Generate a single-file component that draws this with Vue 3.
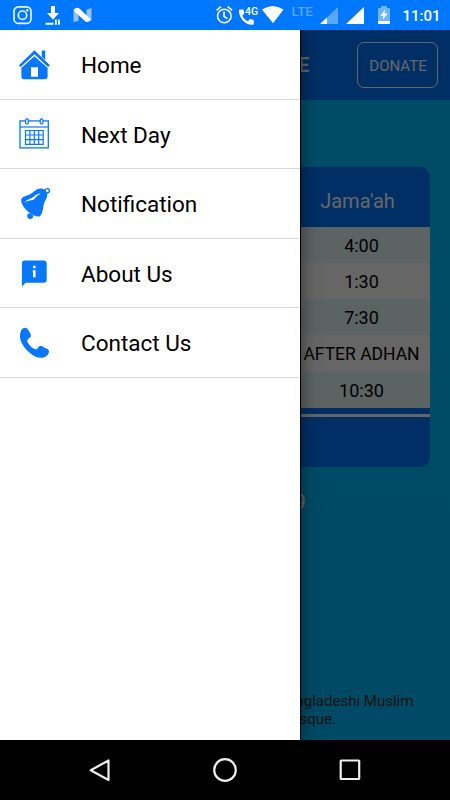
<script setup>
const items = [
  { id: 'home', label: 'Home' },
  { id: 'calendar', label: 'Next Day' },
  { id: 'bell', label: 'Notification' },
  { id: 'about', label: 'About Us' },
  { id: 'phone', label: 'Contact Us' },
]
const times = ['4:00', '1:30', '7:30', 'AFTER ADHAN', '10:30']
</script>

<template>
  <div class="phone">
    <header class="status">
      <svg class="status-icons" width="450" height="30" viewBox="0 0 450 30">
        <g fill="none" stroke="#e9f2ff" stroke-width="1.7">
          <rect x="14" y="6.8" width="17" height="16.6" rx="4.5" />
          <circle cx="22.5" cy="15.2" r="4.2" />
        </g>
        <circle cx="27.3" cy="10.3" r="1.2" fill="#e9f2ff" />
        <path d="M51 6h4v7h4l-6 6.500-6-6.500h4zM45.500 22.800h8v2h-8zM55 19.500h1.800v5.300H55zM58 19.500h1.800v5.300H58z" fill="#fff" />
        <path d="M73.500 9l5-1v13l-5 1zM86.500 9.500l5-1.500v12.500l-5 1z" fill="#8fc2ff" />
        <path d="M75 8.500q2.500-1.500 5 .5l11 10.500q-2 3-5 2.500L74 11z" fill="#fff" />
        <g fill="none" stroke="#fff" stroke-width="1.600">
          <circle cx="224.300" cy="16" r="6.800" />
          <path d="M224 11.500v5l3.500 2.100M216.500 10.300l4.500-3.700M227.600 6.600l4.500 3.700" />
        </g>
        <path transform="translate(236.500 6.800)" d="M3.400 2.600H7l.8 4.200-2 2.200c1.400 2.700 2.900 4.200 5.400 5.400l2.200-2.200 3.800 1v3.700c0 .7-.5 1.100-1.200 1.100C8.300 18 2.400 11 2.400 3.600c0-.6.400-1 1-1z" fill="#fff" />
        <path d="M262 9.500q10.700-7 21.600 0L273 23.200z" fill="#fff" />
        <path d="M338 7v17h-18z" fill="#59a7ff" />
        <path d="M327 17.500V24h-7z" fill="#fff" />
        <path d="M364 7v17h-18z" fill="#fff" />
        <path d="M378 8h3V6h6v2h3v13h-12z" fill="#70b3ff" />
        <path d="M378 21h12v3h-12zM385 9.500l-4.500 6.300h2.700l-.5 4.200 4.800-6.500h-3z" fill="#fff" />
      </svg>
      <span class="net">4G</span>
      <span class="lte">LTE</span>
      <span class="clock">11:01</span>
    </header>

    <div class="stage">
      <main class="page">
        <div class="bar">
          <span class="title">E</span>
          <button class="donate">DONATE</button>
        </div>
        <section class="card">
          <div class="card-head"><span class="cell">Jama'ah</span></div>
          <div v-for="time in times" :key="time" class="row"><span class="cell" :class="{ words: time.length > 5 }">{{ time }}</span></div>
          <div class="card-foot"></div>
        </section>
        <div class="date">9</div>
        <p class="about">ngladeshi Muslim<br /><span class="last">sque.</span></p>
      </main>
      <div class="scrim"></div>
      <nav class="drawer">
        <a v-for="item in items" :key="item.id" class="item">
          <svg class="icon" width="36" height="36" viewBox="0 0 36 36">
            <g v-if="item.id === 'home'" fill="#0877fc">
              <path d="M18.400 3.300 34 18.200l-2 1.800L18.400 7.200 4.700 20 2.900 18.200z" />
              <path d="M25.800 3.600h3.400v9.500l-3.400-3.300z" />
              <path fill-rule="evenodd" d="M18.400 9.200 32.200 21.500h-.6v8q0 2.700-2.700 2.700H8.100q-2.700 0-2.700-2.700v-8h-.6zM15 20.300v9.500h7v-9.500z" />
            </g>
            <g v-else-if="item.id === 'calendar'" fill="none" stroke="#0877fc" stroke-width="1.200">
              <rect x="4" y="4.900" width="28.300" height="27" stroke-width="1.300" />
              <path d="M4 11h28.300" />
              <rect x="9.600" y="2.800" width="2.700" height="5.200" rx="1.300" fill="#fff" />
              <rect x="24.200" y="2.800" width="2.700" height="5.200" rx="1.300" fill="#fff" />
              <path d="M9.500 14.500h17.700v13.800H9.500zM13.900 14.500v13.800M18.300 14.500v13.800M22.700 14.500v13.800M9.500 19h17.700M9.500 23.600h17.700" />
            </g>
            <g v-else-if="item.id === 'bell'">
              <path d="M5.200 13.200C7.200 9.300 12 10.600 17.300 6c5.800-5.300 11-4.200 13.700.4 1.500 5.400-3.100 8.300-3.700 14.400-.4 4-1.500 8.300-3.700 9.800C15.500 30.500 4.400 20.500 5.200 13.200z" fill="#0877fc" />
              <path d="M8.800 17.300c.4-3.800 7.300-4.300 10.300-7.700 2.200-1.800 4-2.300 5.500-1.600-2.800.7-3.900 2.500-5.600 4.600-3 2.900-8.900 1.300-10.200 4.700z" fill="#fff" />
              <circle cx="31.300" cy="4.700" r="2.100" fill="#fff" stroke="#0877fc" stroke-width="1.400" />
              <path d="M11.200 29q1-3 4-1.200l2.200 1.700q-.2 3.700-3.800 3.500-2.700-.8-2.400-4z" fill="#0877fc" />
            </g>
            <g v-else-if="item.id === 'about'">
              <path d="M8.700 5.500h19q3 0 3 3v16.300q0 3-3 3H9.600l-3.700 3.800V8.500q0-3 2.800-3z" fill="#0877fc" />
              <path d="M17.100 10.800h2.500v2.500h-2.500zM16.800 15.300h2.800v6.900h-2.600v-5h-.2z" fill="#fff" />
            </g>
            <path v-else d="M5.100 5.600c1.800-3.600 5.600-3.500 7.200-.7 1.500 2.700 4.300 5.800 1.200 8-2.500 1.600-2.900 2.600-1.200 5.300 2 3.200 4.500 5.300 7.400 6.100 1.900.5 2.200-2.900 4.300-3.300 2.300-.5 4 1.600 6.500 2.600 3.200 1.400 3.300 4.200.7 6.600-4.600 4.600-12 2.400-17.200-2.200C7.100 22.300 1.400 14.100 5.100 5.600z" fill="#0877fc" />
          </svg>
          <span class="label">{{ item.label }}</span>
        </a>
      </nav>
    </div>

    <footer class="keys">
      <svg width="30" height="30" viewBox="0 0 30 30"><path d="M23.500 5.500v19.500L5.700 15.200z" /></svg>
      <svg width="30" height="30" viewBox="0 0 30 30"><circle cx="15" cy="15" r="10.800" /></svg>
      <svg width="30" height="30" viewBox="0 0 30 30"><rect x="5.700" y="5.500" width="18.500" height="18.500" rx=".5" /></svg>
    </footer>
  </div>
</template>

<style>
body { margin: 0; background: #000; }
</style>

<style scoped>
.phone { width: 450px; height: 800px; display: flex; flex-direction: column; overflow: hidden; font-family: Roboto, sans-serif; }
.status { position: relative; flex: 0 0 30px; height: 30px; background: #0077ff; color: #fff; }
.status-icons { display: block; }
.net, .lte, .clock { position: absolute; line-height: 1; white-space: nowrap; }
.net { left: 245px; top: 7px; font-size: 10.5px; font-weight: 500; }
.lte { left: 291.500px; top: 5px; font-size: 13.500px; font-weight: 500; color: #59a7ff; }
.clock { left: 402.500px; top: 9px; font-size: 15px; font-weight: 500; }
.stage { position: relative; flex: 0 0 710px; height: 710px; overflow: hidden; }
.page { height: 710px; display: flex; flex-direction: column; background: linear-gradient(#00bfff 0%, #00b8ff 100%); }
.bar { box-sizing: border-box; height: 70px; flex: none; display: flex; align-items: center; justify-content: space-between; padding: 0 12px 0 298px; background: #0077ff; color: #fff; }
.title { font-size: 20px; font-weight: 700; }
.donate { box-sizing: border-box; width: 81px; height: 46px; padding: 1px 0 0 1px; border: 1.500px solid #fff; border-radius: 7px; background: transparent; color: #fff; font: 15px Roboto, sans-serif; }
.card { flex: none; margin: 67px 20px 0; height: 300px; display: flex; flex-direction: column; border-radius: 10px; overflow: hidden; background: #0077ff; font-size: 18px; }
.cell { width: 137px; text-align: center; white-space: nowrap; }
.words { font-size: 17.500px; }
.card-head, .row { display: flex; justify-content: flex-end; align-items: center; }
.card-head { box-sizing: border-box; height: 59.500px; padding: 9px 4px 0 0; color: #fff; font-size: 20px; }
.row { box-sizing: border-box; height: 36.300px; padding-top: 1.500px; background: #fff; color: #000; }
.row:nth-child(even) { background: #e6f7f8; }
.card-foot { height: 3px; margin-top: 6px; background: #fff; }
.date { flex: none; padding-left: 294.500px; margin-top: 23px; font-size: 20px; line-height: 24px; color: #fff; }
.about { margin: auto 37px 12px 0; align-self: flex-end; width: 117.500px; font-size: 15px; line-height: 18px; white-space: nowrap; color: #30302c; }
.last { padding-left: 4px; }
.scrim { position: absolute; inset: 0; background: rgba(0, 0, 0, .6); }
.drawer { position: absolute; inset: 0 auto 0 0; width: 300px; background: #fff; border-right: 1px solid #000; box-shadow: 0 0 16px rgba(0, 0, 0, .5); }
.item { box-sizing: border-box; height: 69.550px; display: flex; align-items: center; gap: 29px; padding: 1px 0 0 16px; border-bottom: 1px solid #d7d7d7; color: #000; font-size: 22.500px; }
.label { padding-top: 1px; }
.icon { flex: none; }
.keys { flex: 0 0 60px; height: 60px; display: flex; align-items: center; justify-content: center; gap: 95px; background: #000; }
.keys svg { fill: none; stroke: #eee; stroke-width: 2.200; stroke-linejoin: round; }
</style>
